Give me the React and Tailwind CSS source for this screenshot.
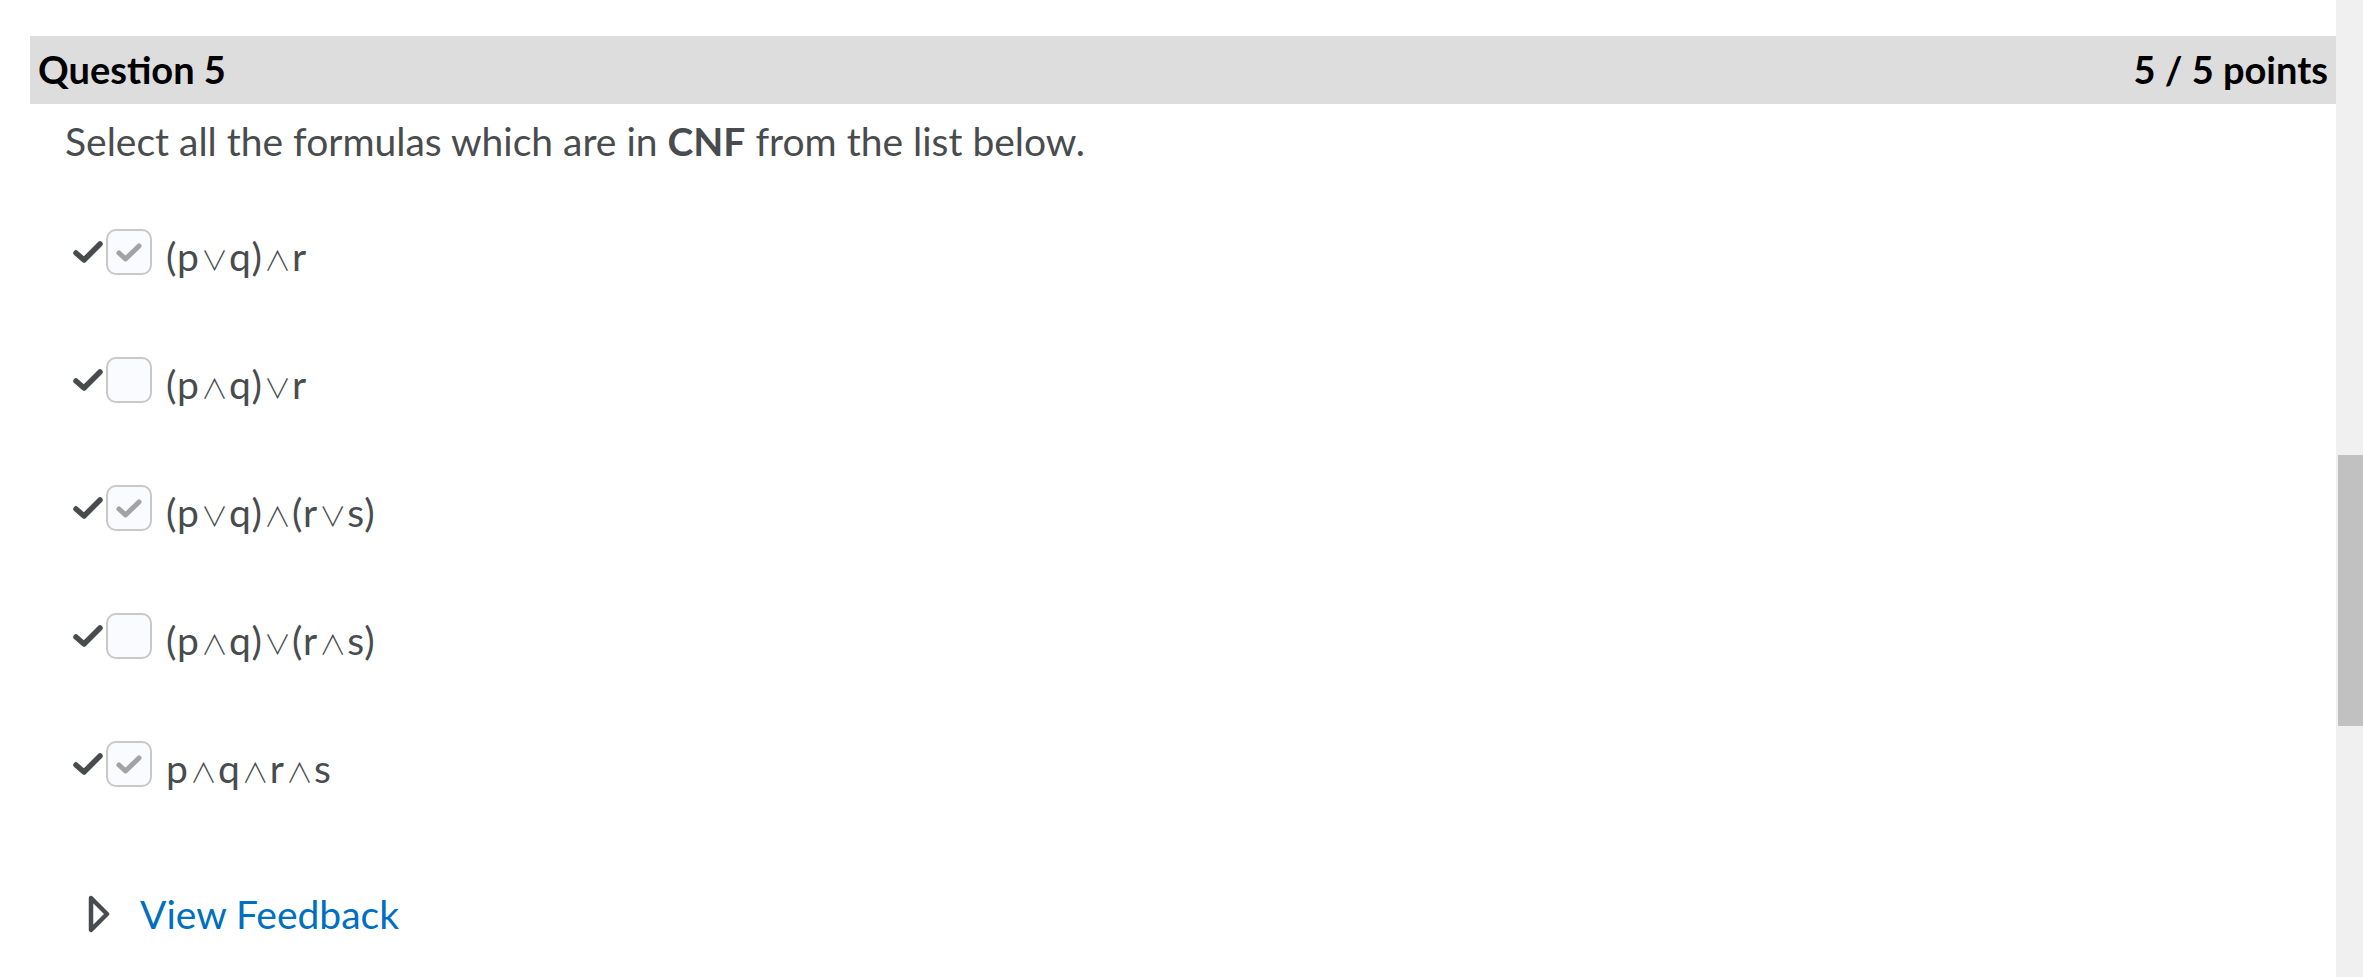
import React from "react";

const font = { fontFamily: '"Lato", "DejaVu Sans", sans-serif' };
const opFont = { fontFamily: '"Noto Sans CJK JP", "DejaVu Sans", sans-serif' };

function LeftCheck() {
  return (
    <svg width="32" height="26" viewBox="0 0 32 26" className="shrink-0">
      <path d="M4 14 L12 21 L28 5" fill="none" stroke="#494c4e" strokeWidth="5.5" strokeLinecap="round" strokeLinejoin="round" />
    </svg>
  );
}

function Box({ checked }) {
  return (
    <div className="w-[46px] h-[46px] rounded-[10px] border-2 border-[#c8c8c8] bg-[#f9fbff] flex items-center justify-center shrink-0">
      {checked && (
        <svg width="30" height="24" viewBox="0 0 30 24">
          <path d="M5 13 L11.5 19 L25 6" fill="none" stroke="#a3a3a3" strokeWidth="5" strokeLinecap="round" strokeLinejoin="round" />
        </svg>
      )}
    </div>
  );
}

function Formula({ text }) {
  return (
    <>
      {text.split("").map((c, i) =>
        c === "∨" || c === "∧" ? (
          <span key={i} style={opFont} className="text-[27px] font-light mx-[1px]">{c}</span>
        ) : (
          <span key={i} className="tracking-[1px]">{c}</span>
        )
      )}
    </>
  );
}

function Row({ checked, text }) {
  return (
    <div className="flex items-center h-[46px]">
      <div className="ml-[72px]"><LeftCheck /></div>
      <div className="ml-[2px]"><Box checked={checked} /></div>
      <span className="ml-[14px] text-[39px] leading-[46px] text-[#494c4e] pt-[11px] whitespace-nowrap">
        <Formula text={text} />
      </span>
    </div>
  );
}

export default function App() {
  const rows = [
    { checked: true, text: "(p∨q)∧r" },
    { checked: false, text: "(p∧q)∨r" },
    { checked: true, text: "(p∨q)∧(r∨s)" },
    { checked: false, text: "(p∧q)∨(r∧s)" },
    { checked: true, text: "p∧q∧r∧s" },
  ];
  return (
    <div className="flex w-[2363px] h-[977px] bg-white overflow-hidden" style={font}>
      <div className="flex-1 pt-[36px]">
        <div className="ml-[30px] h-[68px] bg-[#dddddd] flex items-center justify-between pl-[8px] pr-[8px] pb-[3px]">
          <span className="text-[38px] font-bold text-black leading-none">Question 5</span>
          <span className="text-[38px] font-bold text-black leading-none">5 / 5 points</span>
        </div>
        <p className="mt-[12px] ml-[65px] text-[39px] leading-[51px] text-[#494c4e] whitespace-nowrap">
          Select all the formulas which are in <b className="font-bold">CNF</b> from the list below.
        </p>
        <div className="mt-[62px] flex flex-col gap-[82px]">
          {rows.map((r, i) => (
            <Row key={i} {...r} />
          ))}
        </div>
        <div className="mt-[104px] ml-[88px] flex items-center">
          <svg width="22" height="38" viewBox="0 0 22 38" className="shrink-0">
            <path d="M3 3 L19 19 L3 35 Z" fill="none" stroke="#494c4e" strokeWidth="4.5" strokeLinejoin="round" />
          </svg>
          <span className="ml-[30px] text-[39px] leading-[46px] text-[#006fbf]">View Feedback</span>
        </div>
      </div>
      <div className="w-[27px] h-full bg-[#f0f0f0] pt-[455px] pl-[2px]">
        <div className="h-[271px] bg-[#c1c1c1]" />
      </div>
    </div>
  );
}
